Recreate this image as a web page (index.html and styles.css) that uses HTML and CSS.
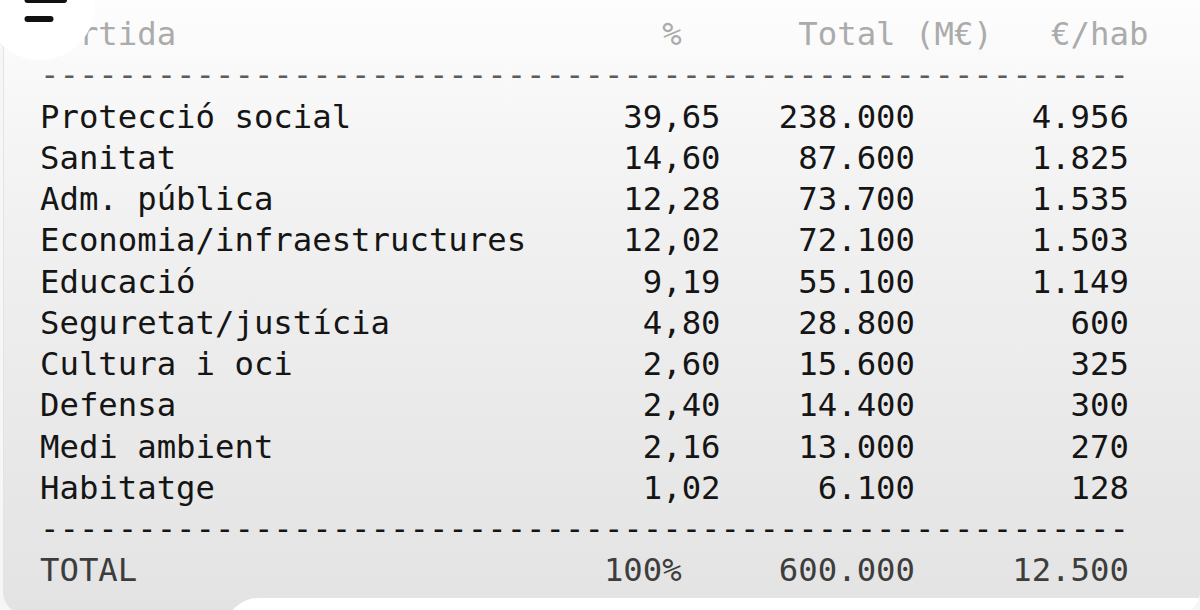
FILE: index.html
```html
<!DOCTYPE html>
<html lang="ca">
<head>
<meta charset="utf-8">
<title>Pressupost per partides</title>
<link rel="stylesheet" href="styles.css">
</head>
<body>
<div class="card">
  <div class="sheet">
    <div class="line head">Partida                         %      Total (M€)   €/hab</div>
    <div class="line rule rule-top">--------------------------------------------------------</div>
    <div class="row"><span class="name">Protecció social</span><span class="num">39,65</span><span class="num">238.000</span><span class="num">4.956</span></div>
    <div class="row"><span class="name">Sanitat</span><span class="num">14,60</span><span class="num">87.600</span><span class="num">1.825</span></div>
    <div class="row"><span class="name">Adm. pública</span><span class="num">12,28</span><span class="num">73.700</span><span class="num">1.535</span></div>
    <div class="row"><span class="name">Economia/infraestructures</span><span class="num">12,02</span><span class="num">72.100</span><span class="num">1.503</span></div>
    <div class="row"><span class="name">Educació</span><span class="num">9,19</span><span class="num">55.100</span><span class="num">1.149</span></div>
    <div class="row"><span class="name">Seguretat/justícia</span><span class="num">4,80</span><span class="num">28.800</span><span class="num">600</span></div>
    <div class="row"><span class="name">Cultura i oci</span><span class="num">2,60</span><span class="num">15.600</span><span class="num">325</span></div>
    <div class="row"><span class="name">Defensa</span><span class="num">2,40</span><span class="num">14.400</span><span class="num">300</span></div>
    <div class="row"><span class="name">Medi ambient</span><span class="num">2,16</span><span class="num">13.000</span><span class="num">270</span></div>
    <div class="row"><span class="name">Habitatge</span><span class="num">1,02</span><span class="num">6.100</span><span class="num">128</span></div>
    <div class="line rule rule-bottom">--------------------------------------------------------</div>
    <div class="row total"><span class="name">TOTAL</span><span class="num">100%</span><span class="num">600.000</span><span class="num">12.500</span></div>
  </div>
  <div class="sheet-cover"></div>
</div>
<button class="menu-btn" aria-label="Menú">
  <svg width="110" height="110" viewBox="0 0 110 110" aria-hidden="true">
    <line x1="27.5" y1="0" x2="64" y2="0" stroke="#111" stroke-width="6" stroke-linecap="round"/>
    <line x1="27.5" y1="19" x2="50.5" y2="19" stroke="#111" stroke-width="6" stroke-linecap="round"/>
  </svg>
</button>
</body>
</html>
```

FILE: styles.css
```css
html, body {
  margin: 0;
  padding: 0;
}

body {
  width: 1200px;
  height: 610px;
  overflow: hidden;
  background: #f6f6f6;
  position: relative;
}

.card {
  position: relative;
  margin-left: 3px;
  height: 614px;
  border-radius: 0 0 22px 22px;
  background: linear-gradient(180deg, #fdfdfd 0%, #f1f1f1 35%, #e9e9e9 70%, #e3e3e3 100%);
  border-left: 1px solid #e4e4e4;
  overflow: hidden;
}

.sheet {
  padding: 14px 0 0 36px;
  font-family: "DejaVu Sans Mono", "Liberation Mono", monospace;
  font-size: 32.3px;
  line-height: 41.25px;
  color: #151515;
}

.line {
  white-space: pre;
}

.head {
  color: #ababab;
}

.rule-top {
  color: #5c5c5c;
}

.rule-bottom {
  color: #151515;
}

.row {
  display: grid;
  grid-template-columns: 30ch 5ch 10ch 11ch;
  white-space: pre;
}

.num {
  text-align: right;
}

.total {
  grid-template-columns: 28ch 5ch 12ch 11ch;
  color: #3d3d3d;
}

.sheet-cover {
  position: absolute;
  left: 222px;
  top: 598px;
  width: 1000px;
  height: 60px;
  background: #ffffff;
  border-radius: 32px 0 0 0;
}

.menu-btn {
  position: absolute;
  left: -15px;
  top: -50px;
  width: 110px;
  height: 110px;
  padding: 0;
  border: none;
  border-radius: 50%;
  background: #ffffff;
  cursor: pointer;
}

.menu-btn svg {
  position: absolute;
  left: 15px;
  top: 50px;
  display: block;
}
```
